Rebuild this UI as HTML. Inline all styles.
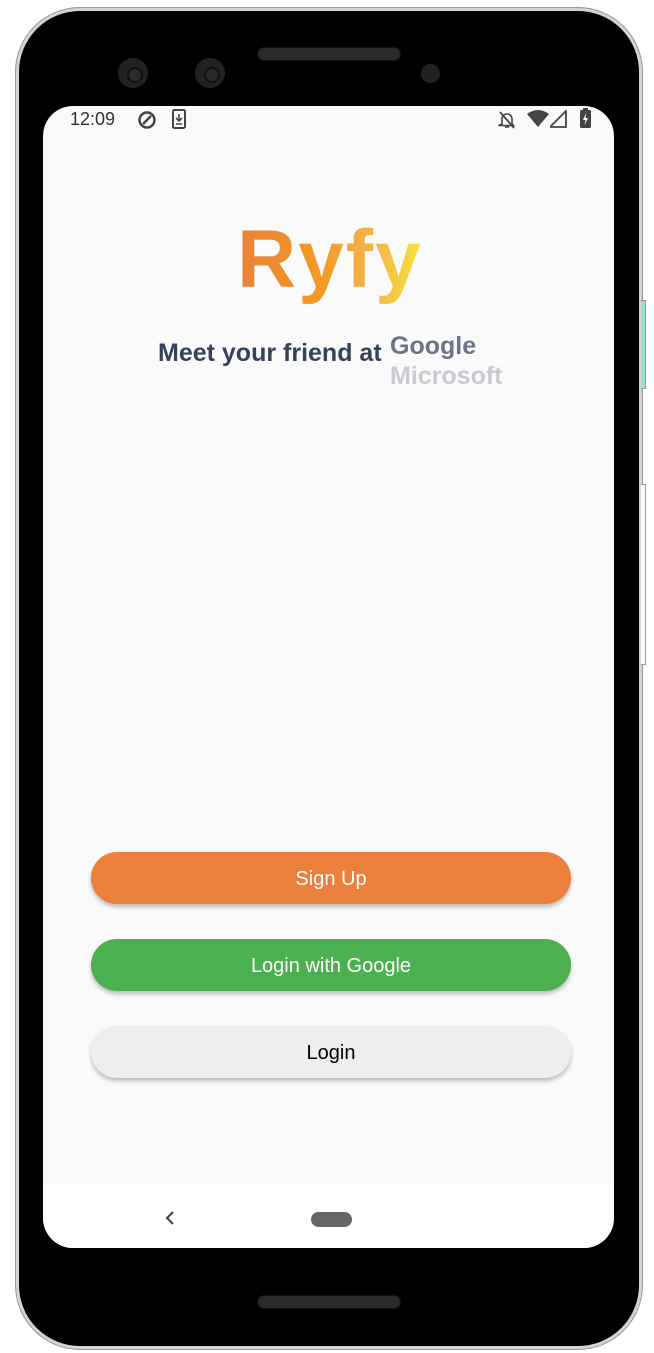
<!DOCTYPE html>
<html><head><meta charset="utf-8">
<style>
*{margin:0;padding:0;box-sizing:border-box}
html,body{width:654px;height:1353px;background:#fff;overflow:hidden;font-family:"Liberation Sans",sans-serif}
.phone{position:absolute;left:16px;top:8px;width:626px;height:1341px;border-radius:64px;background:#000;border:3px solid #d4d4d4;box-shadow:0 0 0 1px #999}
.btnside{position:absolute;left:641px;width:5px;border:1px solid #999;border-left:none}
.screen{position:absolute;left:43px;top:106px;width:571px;height:1142px;border-radius:30px;background:#fafafa;overflow:hidden}
.nav{position:absolute;left:0;bottom:0;width:100%;height:64px;background:#fff}
.spk{position:absolute;left:257px;width:144px;height:14px;border-radius:7px;background:#2a2a2a;border:1px solid #111}
.cam{position:absolute;top:58px;width:30px;height:30px;border-radius:50%;background:#222}
.cam::after{content:"";position:absolute;left:9px;top:9px;width:12px;height:12px;border-radius:50%;border:2px solid #111;background:#2a2a2a}
.b{position:absolute;left:48px;width:480px;height:52px;border-radius:26px;font-size:20px;text-align:center;line-height:54px;box-shadow:0 3px 4px rgba(0,0,0,.25)}
</style></head><body>
<div class="phone"></div>
<div class="btnside" style="top:300px;height:89px;background:#9ee0c6"></div>
<div class="btnside" style="top:484px;height:181px;background:#fafafa"></div>
<div class="spk" style="top:47px"></div>
<div class="spk" style="top:1295px"></div>
<div class="cam" style="left:118px"></div>
<div class="cam" style="left:195px"></div>
<div style="position:absolute;left:421px;top:64px;width:19px;height:19px;border-radius:50%;background:#222"></div>
<div class="screen">
 <div style="position:absolute;left:27px;top:3px;font-size:18px;color:#333">12:09</div>
 <svg style="position:absolute;left:94px;top:4px" width="20" height="20" viewBox="0 0 20 20"><circle cx="10" cy="10" r="7.5" fill="none" stroke="#444" stroke-width="2.5"/><path d="M6 14L14 6" stroke="#444" stroke-width="2.5"/></svg>
 <svg style="position:absolute;left:129px;top:3px" width="14" height="20" viewBox="0 0 14 20"><rect x="1" y="1" width="12" height="18" rx="1.5" fill="none" stroke="#444" stroke-width="2"/><path d="M7 5v7M4 9l3 3 3-3M4 15h6" stroke="#444" stroke-width="1.6" fill="none"/></svg>
 <svg style="position:absolute;left:455px;top:4px" width="18" height="20" viewBox="0 0 18 20"><path d="M4 14V9a5 5 0 0 1 10 0v5l1.5 1.5h-15z M7 17h4" fill="none" stroke="#444" stroke-width="1.6"/><path d="M2 2L16 18" stroke="#444" stroke-width="1.8"/></svg>
 <svg style="position:absolute;left:484px;top:4px" width="22" height="18" viewBox="0 0 22 18"><path d="M0 4Q11-4 22 4L11 17z" fill="#444"/></svg>
 <svg style="position:absolute;left:507px;top:4px" width="17" height="18" viewBox="0 0 17 18"><path d="M16 1V17H0z" fill="none" stroke="#444" stroke-width="1.8"/></svg>
 <svg style="position:absolute;left:537px;top:2px" width="11" height="20" viewBox="0 0 11 20"><rect x="0" y="2" width="11" height="18" rx="1.5" fill="#444"/><rect x="3" y="0" width="5" height="3" fill="#444"/><path d="M6 5L3 12h2.5l-1 5L8 10H5.5z" fill="#fff"/></svg>

 <svg style="position:absolute;left:180px;top:108px" width="220" height="100" viewBox="0 0 220 100">
  <defs><linearGradient id="g" x1="0" x2="1"><stop offset="0" stop-color="#e8803a"/><stop offset=".45" stop-color="#f39a24"/><stop offset=".7" stop-color="#f2b24c"/><stop offset="1" stop-color="#f8e03a"/></linearGradient></defs>
  <text x="14" y="73" font-family="Liberation Sans,sans-serif" font-size="82" font-weight="bold" fill="url(#g)" letter-spacing="2">Ryfy</text>
 </svg>
 <div style="position:absolute;left:115px;top:233px;font-size:25px;font-weight:bold;color:#354259">Meet your friend at</div>
 <div style="position:absolute;left:347px;top:226px;font-size:25px;font-weight:bold;color:#6a7587">Google</div>
 <div style="position:absolute;left:347px;top:256px;font-size:25px;font-weight:bold;color:#c8ccd2">Microsoft</div>

 <div class="b" style="top:746px;background:#ea803c;color:#fff">Sign Up</div>
 <div class="b" style="top:833px;background:#4caf50;color:#fff">Login with Google</div>
 <div class="b" style="top:920px;background:#eeeeee;color:#000">Login</div>

 <div class="nav">
  <svg style="position:absolute;left:121px;top:26px" width="12" height="16" viewBox="0 0 12 16"><path d="M9 2L3 8l6 6" fill="none" stroke="#444" stroke-width="2"/></svg>
  <div style="position:absolute;left:268px;top:28px;width:41px;height:15px;border-radius:8px;background:#666"></div>
 </div>
</div>
</body></html>
